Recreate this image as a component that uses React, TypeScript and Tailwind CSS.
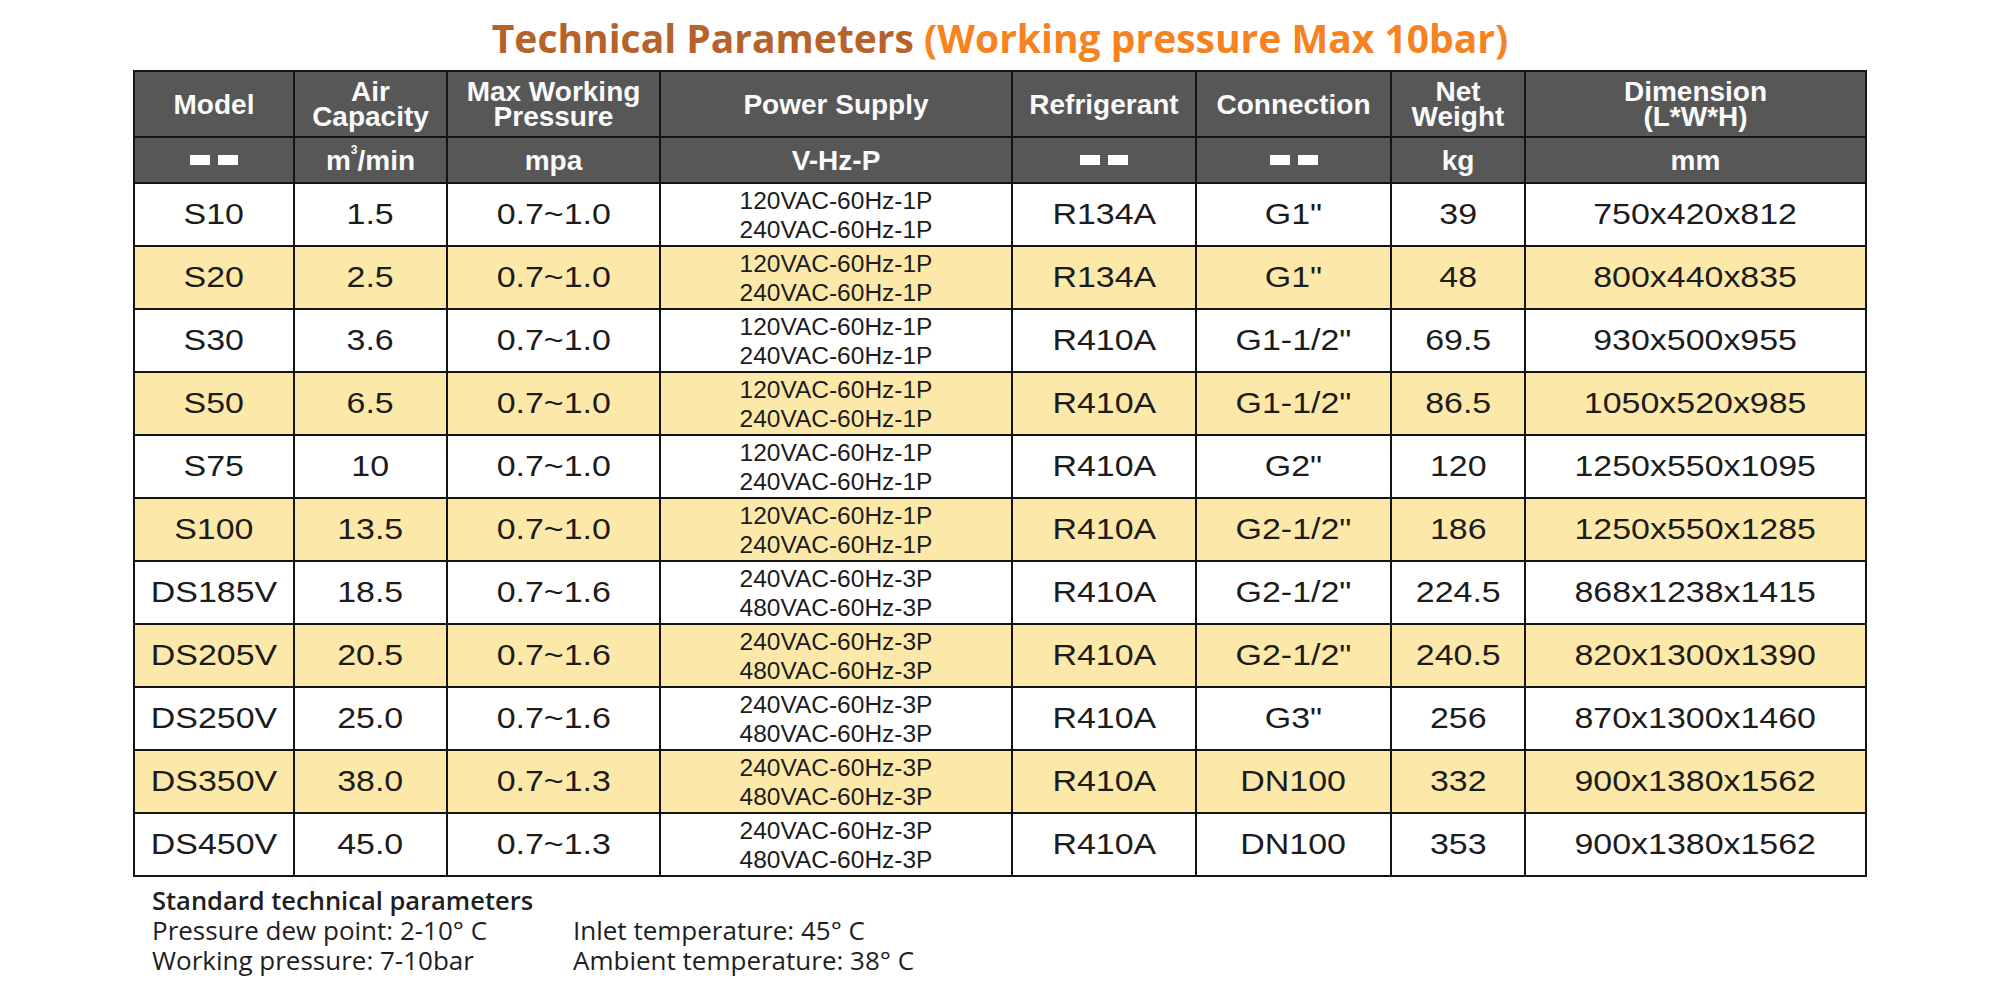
import React from 'react';

interface Row {
  model: string;
  air: string;
  pressure: string;
  power: [string, string];
  refrigerant: string;
  connection: string;
  weight: string;
  dimension: string;
}

const P1: [string, string] = ['120VAC-60Hz-1P', '240VAC-60Hz-1P'];
const P3: [string, string] = ['240VAC-60Hz-3P', '480VAC-60Hz-3P'];

const rows: Row[] = [
  { model: 'S10', air: '1.5', pressure: '0.7~1.0', power: P1, refrigerant: 'R134A', connection: 'G1"', weight: '39', dimension: '750x420x812' },
  { model: 'S20', air: '2.5', pressure: '0.7~1.0', power: P1, refrigerant: 'R134A', connection: 'G1"', weight: '48', dimension: '800x440x835' },
  { model: 'S30', air: '3.6', pressure: '0.7~1.0', power: P1, refrigerant: 'R410A', connection: 'G1-1/2"', weight: '69.5', dimension: '930x500x955' },
  { model: 'S50', air: '6.5', pressure: '0.7~1.0', power: P1, refrigerant: 'R410A', connection: 'G1-1/2"', weight: '86.5', dimension: '1050x520x985' },
  { model: 'S75', air: '10', pressure: '0.7~1.0', power: P1, refrigerant: 'R410A', connection: 'G2"', weight: '120', dimension: '1250x550x1095' },
  { model: 'S100', air: '13.5', pressure: '0.7~1.0', power: P1, refrigerant: 'R410A', connection: 'G2-1/2"', weight: '186', dimension: '1250x550x1285' },
  { model: 'DS185V', air: '18.5', pressure: '0.7~1.6', power: P3, refrigerant: 'R410A', connection: 'G2-1/2"', weight: '224.5', dimension: '868x1238x1415' },
  { model: 'DS205V', air: '20.5', pressure: '0.7~1.6', power: P3, refrigerant: 'R410A', connection: 'G2-1/2"', weight: '240.5', dimension: '820x1300x1390' },
  { model: 'DS250V', air: '25.0', pressure: '0.7~1.6', power: P3, refrigerant: 'R410A', connection: 'G3"', weight: '256', dimension: '870x1300x1460' },
  { model: 'DS350V', air: '38.0', pressure: '0.7~1.3', power: P3, refrigerant: 'R410A', connection: 'DN100', weight: '332', dimension: '900x1380x1562' },
  { model: 'DS450V', air: '45.0', pressure: '0.7~1.3', power: P3, refrigerant: 'R410A', connection: 'DN100', weight: '353', dimension: '900x1380x1562' },
];

const Dashes = () => (
  <div className="flex items-center justify-center gap-[8px]">
    <span className="block w-[20px] h-[10px] bg-white" />
    <span className="block w-[20px] h-[10px] bg-white" />
  </div>
);

const Cell: React.FC<{ children: React.ReactNode }> = ({ children }) => (
  <td className="border-2 border-[#141414] text-center align-middle p-0">
    <span className="inline-block scale-x-[1.17]">{children}</span>
  </td>
);

const th = 'border-2 border-[#141414] text-center align-middle p-0 font-bold';

export default function App() {
  return (
    <div className="w-[2000px] h-[1000px] bg-white overflow-hidden font-['Liberation_Sans',Arial,sans-serif]">
      <h1 className="pt-[14px] h-[70px] text-center font-['Open_Sans',sans-serif] font-bold text-[39px] leading-[48px]">
        <span className="text-[#b5632b]">Technical Parameters </span>
        <span className="text-[#f6831f]">(Working pressure Max 10bar)</span>
      </h1>

      <table className="ml-[133px] w-[1732px] table-fixed border-collapse">
        <colgroup>
          <col className="w-[160px]" />
          <col className="w-[153px]" />
          <col className="w-[213px]" />
          <col className="w-[352px]" />
          <col className="w-[184px]" />
          <col className="w-[195px]" />
          <col className="w-[134px]" />
          <col className="w-[341px]" />
        </colgroup>
        <thead className="bg-[#575757] text-[#fafafa] text-[28px] leading-[25px]">
          <tr className="h-[66px]">
            <th className={th}>Model</th>
            <th className={th}>Air<br />Capacity</th>
            <th className={th}>Max Working<br />Pressure</th>
            <th className={th}>Power Supply</th>
            <th className={th}>Refrigerant</th>
            <th className={th}>Connection</th>
            <th className={th}>Net<br />Weight</th>
            <th className={th}>Dimension<br />(L*W*H)</th>
          </tr>
          <tr className="h-[46px]">
            <th className={th}><Dashes /></th>
            <th className={th}>m<sup className="text-[12px] align-[10px]">3</sup>/min</th>
            <th className={th}>mpa</th>
            <th className={th}>V-Hz-P</th>
            <th className={th}><Dashes /></th>
            <th className={th}><Dashes /></th>
            <th className={th}>kg</th>
            <th className={th}>mm</th>
          </tr>
        </thead>
        <tbody className="text-[29px] text-[#1c1c1c]">
          {rows.map((r, i) => (
            <tr key={r.model} className={i % 2 === 1 ? 'h-[63px] bg-[#fce9a9]' : 'h-[63px] bg-white'}>
              <Cell>{r.model}</Cell>
              <Cell>{r.air}</Cell>
              <Cell>{r.pressure}</Cell>
              <td className="border-2 border-[#141414] text-center align-middle p-0 text-[24.5px] leading-[29px]">
                <div>{r.power[0]}</div>
                <div>{r.power[1]}</div>
              </td>
              <Cell>{r.refrigerant}</Cell>
              <Cell>{r.connection}</Cell>
              <Cell>{r.weight}</Cell>
              <Cell>{r.dimension}</Cell>
            </tr>
          ))}
        </tbody>
      </table>

      <div className="pl-[152px] pt-[8px] font-['Open_Sans',sans-serif] text-[26px] leading-[30px] text-[#1e1e1e]">
        <div className="font-semibold text-[25.5px]">Standard technical parameters</div>
        <div className="flex">
          <div className="w-[421px]">
            <div>Pressure dew point: 2-10° C</div>
            <div>Working pressure: 7-10bar</div>
          </div>
          <div>
            <div>Inlet temperature: 45° C</div>
            <div>Ambient temperature: 38° C</div>
          </div>
        </div>
      </div>
    </div>
  );
}
